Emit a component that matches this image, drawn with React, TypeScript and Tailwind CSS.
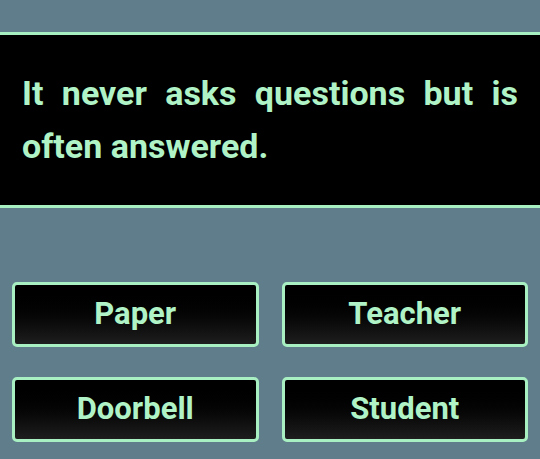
import React from "react";

type Answer = {
  label: string;
};

const answers: Answer[] = [
  { label: "Paper" },
  { label: "Teacher" },
  { label: "Doorbell" },
  { label: "Student" },
];

const App = () => {
  return (
    <div
      className="w-full h-[459px] bg-[#607d8b] pt-8 overflow-hidden"
      style={{ fontFamily: "Roboto, 'Noto Sans', sans-serif" }}
    >
      {/* question */}
      <div className="w-full bg-black border-y-[3px] border-[#a8f0c2] px-[22px] py-8">
        <p className="text-[34px] leading-[53px] font-bold text-[#b0f3c6] text-justify">
          It never asks questions but is often answered.
        </p>
      </div>

      {/* answers */}
      <div className="grid grid-cols-2 gap-x-[23px] gap-y-[30px] px-3 mt-[74px]">
        {answers.map((answer) => {
          return (
            <button
              key={answer.label}
              className="h-[65px] flex items-center justify-center rounded-[5px] border-[3px] border-[#a8f0c2] bg-gradient-to-b from-black to-[#1e1e1e] text-[31px] font-bold text-[#b0f3c6]"
            >
              {answer.label}
            </button>
          );
        })}
      </div>
    </div>
  );
};

export default App;
